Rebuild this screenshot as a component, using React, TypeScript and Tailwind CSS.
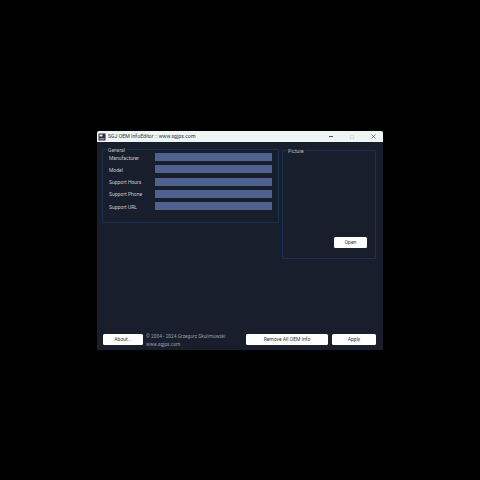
const fields = ["Manufacturer", "Model", "Support Hours", "Support Phone", "Support URL"];

function Btn({ label, className }: { label: string; className: string }) {
  return (
    <button className={`h-[11px] bg-white rounded-[1.5px] text-[5px] leading-[11px] text-[#333] text-center ${className}`}>
      {label}
    </button>
  );
}

export default function App() {
  return (
    <div className="w-[480px] h-[480px] bg-black pl-[97px] pt-[131px] font-['Roboto',sans-serif]">
      <div className="w-[286px] h-[219px] bg-[#181e2b] rounded-t-[2px] flex flex-col">
        {/* title bar */}
        <div className="h-[11px] bg-[#eef5f5] rounded-t-[2px] flex items-center pl-[1px] shrink-0">
          <svg width="8" height="8" viewBox="0 0 8 8" className="mr-[2px]">
            <rect x="0.5" y="0.5" width="7" height="7" fill="#2a2f38" />
            <rect x="1.5" y="1.5" width="3" height="2" fill="#e8eeee" />
            <rect x="1.5" y="5" width="5" height="1.5" fill="#8d949c" />
          </svg>
          <span className="text-[5.2px] leading-none text-[#333]">SGJ OEM InfoEditor :: www.sgjps.com</span>
          <div className="ml-auto flex items-center">
            <div className="w-[4px] h-[0.7px] bg-[#555] mr-[17px]" />
            <div className="w-[4px] h-[4px] border-[0.5px] border-[#d8dddd] mr-[17px]" />
            <svg width="5" height="5" viewBox="0 0 5 5" className="mr-[7px]">
              <path d="M0.5 0.5 L4.5 4.5 M4.5 0.5 L0.5 4.5" stroke="#444" strokeWidth="0.7" />
            </svg>
          </div>
        </div>

        {/* groups */}
        <div className="flex items-start pl-[5px] pr-[7px] flex-1">
          <div className="relative mt-[7px] w-[177px] h-[74px] border border-[#16324e] rounded-[1px] pl-[6px] pt-[3px] pr-[6px]">
            <span className="absolute left-[4px] -top-[3px] bg-[#181e2b] px-[1px] text-[5px] leading-[6px] text-[#b8bcc4]">General</span>
            <div className="flex flex-col gap-[4.25px]">
              {fields.map((f) => (
                <div key={f} className="flex items-center h-[8px]">
                  <span className="w-[46px] pt-[2px] text-[5px] leading-none text-[#c4c8d0] whitespace-nowrap">{f}</span>
                  <div className="flex-1 h-[8px] bg-[#4f618f]" />
                </div>
              ))}
            </div>
          </div>

          <div className="relative mt-[8px] ml-[3px] w-[94px] h-[109px] border border-[#16324e] rounded-[1px] flex justify-end items-end pr-[8px] pb-[10px]">
            <span className="absolute left-[4px] -top-[3px] bg-[#181e2b] px-[1px] text-[5px] leading-[6px] text-[#b8bcc4]">Picture</span>
            <Btn label="Open" className="w-[33px]" />
          </div>
        </div>

        {/* footer */}
        <div className="flex items-end pl-[6px] pr-[7px] pb-[1px] shrink-0">
          <Btn label="About..." className="w-[40px] mb-[4px]" />
          <div className="ml-[3px] text-[4.85px] leading-[8px] text-[#9a9ea8] whitespace-nowrap">
            <div>© 2004 - 2024 Grzegorz Skulimowski</div>
            <div>www.sgjps.com</div>
          </div>
          <Btn label="Remove All OEM Info" className="w-[82px] ml-auto mb-[4px]" />
          <Btn label="Apply" className="w-[44px] ml-[4px] mb-[4px]" />
        </div>
      </div>
    </div>
  );
}
